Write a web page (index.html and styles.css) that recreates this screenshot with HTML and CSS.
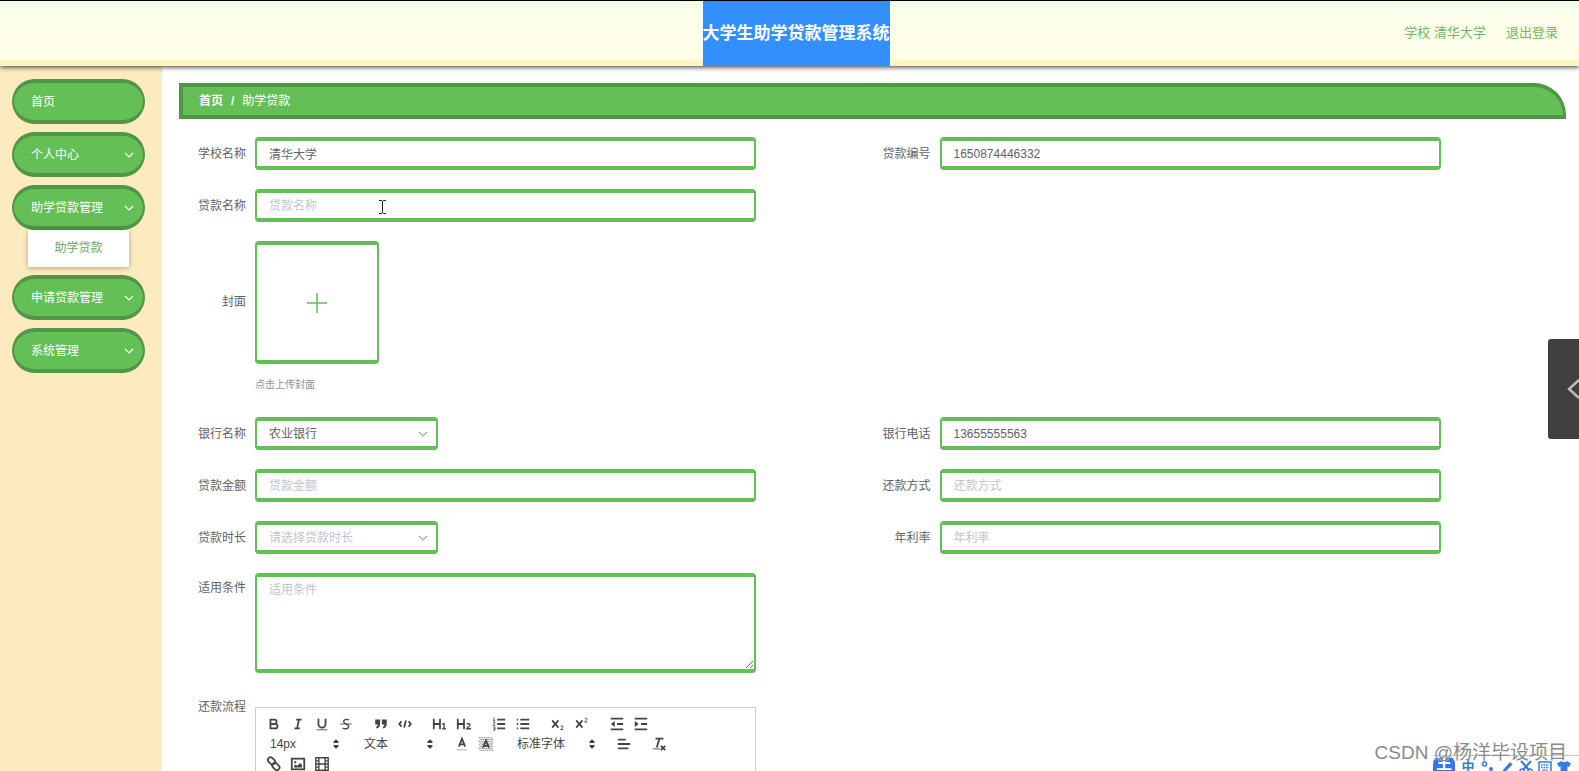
FILE: index.html
```html
<!DOCTYPE html>
<html lang="zh-CN">
<head>
<meta charset="utf-8">
<title>大学生助学贷款管理系统</title>
<link rel="stylesheet" href="styles.css">
</head>
<body>
<svg class="defs" aria-hidden="true">
  <symbol id="chevron" viewBox="0 0 10 10"><path d="M1 3l4 4 4-4" fill="none" stroke="currentColor" stroke-width="1.200"/></symbol>
  <symbol id="updown" viewBox="0 0 18 18"><path d="M7 11l2 2 2-2zM7 7l2-2 2 2z" fill="currentColor" stroke="currentColor" stroke-width="2" stroke-linejoin="round"/></symbol>
</svg>
<header class="header">
  <h1 class="header-title">大学生助学贷款管理系统</h1>
  <nav class="header-links">
    <a href="#">学校 清华大学</a>
    <a href="#">退出登录</a>
  </nav>
</header>
<div class="layout">
  <nav class="sidebar">
    <button class="menu-item" type="button">首页</button>
    <button class="menu-item" type="button">个人中心<svg class="chevron"><use href="#chevron"/></svg></button>
    <div class="menu-group">
      <button class="menu-item" type="button">助学贷款管理<svg class="chevron"><use href="#chevron"/></svg></button>
      <a class="submenu-item" href="#">助学贷款</a>
    </div>
    <button class="menu-item" type="button">申请贷款管理<svg class="chevron"><use href="#chevron"/></svg></button>
    <button class="menu-item" type="button">系统管理<svg class="chevron"><use href="#chevron"/></svg></button>
  </nav>
  <main class="main">
    <nav class="breadcrumb"><a href="#">首页</a><span class="separator">/</span><span>助学贷款</span></nav>
    <form class="form">
      <div class="row">
        <div class="field"><label for="school">学校名称</label><input class="control" id="school" type="text" value="清华大学"></div>
        <div class="field"><label for="number">贷款编号</label><input class="control" id="number" type="text" value="1650874446332"></div>
      </div>
      <div class="row">
        <div class="field"><label for="name">贷款名称</label><input class="control" id="name" type="text" placeholder="贷款名称"></div>
      </div>
      <div class="row">
        <div class="field field-upload"><label for="cover">封面</label>
          <div class="upload">
            <button class="upload-box" id="cover" type="button" aria-label="上传封面"><svg viewBox="0 0 20 20"><path d="M10 0v20M0 10h20" stroke="currentColor" stroke-width="1.5"/></svg></button>
            <p class="upload-tip">点击上传封面</p>
          </div>
        </div>
      </div>
      <div class="row">
        <div class="field"><label for="bank">银行名称</label>
          <span class="select"><select class="control" id="bank"><option>农业银行</option></select><svg class="chevron"><use href="#chevron"/></svg></span></div>
        <div class="field"><label for="phone">银行电话</label><input class="control" id="phone" type="text" value="13655555563"></div>
      </div>
      <div class="row">
        <div class="field"><label for="amount">贷款金额</label><input class="control" id="amount" type="text" placeholder="贷款金额"></div>
        <div class="field"><label for="method">还款方式</label><input class="control" id="method" type="text" placeholder="还款方式"></div>
      </div>
      <div class="row">
        <div class="field"><label for="term">贷款时长</label>
          <span class="select"><select class="control is-empty" id="term"><option>请选择贷款时长</option></select><svg class="chevron"><use href="#chevron"/></svg></span></div>
        <div class="field"><label for="rate">年利率</label><input class="control" id="rate" type="text" placeholder="年利率"></div>
      </div>
      <div class="row">
        <div class="field field-top"><label for="terms">适用条件</label><textarea class="control" id="terms" placeholder="适用条件"></textarea></div>
      </div>
      <div class="row row-editor">
        <div class="field field-top"><span class="label">还款流程</span>
          <div class="editor">
            <div class="toolbar">
              <div class="tools">
                <button type="button" aria-label="粗体"><svg viewBox="0 0 18 18"><path d="M5 4h4.500a2.500 2.500 0 0 1 0 5H5zM5 9h5.500a2.500 2.500 0 0 1 0 5H5z"/></svg></button>
                <button type="button" aria-label="斜体"><svg viewBox="0 0 18 18"><path d="M7 4h6M5 14h6M8 14l2-10"/></svg></button>
                <button type="button" aria-label="下划线"><svg viewBox="0 0 18 18"><path d="M5 3v6a4.012 4.012 0 0 0 4 4 4.012 4.012 0 0 0 4-4V3"/><path class="thin" d="M3 15.500h12"/></svg></button>
                <button type="button" aria-label="删除线"><svg viewBox="0 0 18 18"><path class="thin" d="M2.500 9h13"/><path class="mid" d="M12.500 4.500C10.500 3.500 6.300 3.400 6.300 6.200c0 1.600 1.700 2.200 3 2.600M8.800 9.200c1.700.5 3.200 1.200 3.200 2.700 0 3-4.800 2.900-6.800 1.600"/></svg></button>
              </div>
              <div class="tools">
                <button type="button" aria-label="引用"><svg viewBox="0 0 18 18"><path class="solid" d="M2.500 4H8v5c0 2.500-1.500 4.800-4.300 5v-2.200c1-.2 1.600-1 1.600-2.300H2.500zM10 4h5.500v5c0 2.500-1.500 4.800-4.300 5v-2.200c1-.2 1.600-1 1.600-2.300H10z"/></svg></button>
                <button type="button" aria-label="代码"><svg viewBox="0 0 18 18"><path d="M5 6L2.500 9 5 12M13 6l2.500 3-2.500 3M10 5l-2 8"/></svg></button>
              </div>
              <div class="tools">
                <button type="button" aria-label="一级标题"><svg viewBox="0 0 18 18"><path d="M2 3v12M9 3v12M2 9h7"/><path class="mid" d="M11.500 9.500l2-1v6M11.500 14.300h4"/></svg></button>
                <button type="button" aria-label="二级标题"><svg viewBox="0 0 18 18"><path d="M2 3v12M9 3v12M2 9h7"/><path class="mid" d="M12 9.500c1-1.400 4-1.200 3.700.6-.2 1.500-2.500 2.500-3.500 4.200H17"/></svg></button>
              </div>
              <div class="tools">
                <button type="button" aria-label="有序列表"><svg viewBox="0 0 18 18"><path d="M7 4h9M7 9h9M7 14h9"/><path class="thin" d="M2.500 2.500h1v3M2.300 5.500h2.500M2.500 7.500h2c0 1.500-2 1.700-2 3h2.500M2.500 12.500h2v3.500h-2M3 14.200h1.500"/></svg></button>
                <button type="button" aria-label="无序列表"><svg viewBox="0 0 18 18"><path d="M6 4h10M6 9h10M6 14h10M2 4h1.500M2 9h1.500M2 14h1.500"/></svg></button>
              </div>
              <div class="tools">
                <button type="button" aria-label="下标"><svg viewBox="0 0 18 18"><path d="M2.500 5l7 8M9.500 5l-7 8"/><path class="thin" d="M12 12c.5-1.300 3-1.200 2.700.3-.2 1-2 1.500-2.700 3h3.200"/></svg></button>
                <button type="button" aria-label="上标"><svg viewBox="0 0 18 18"><path d="M2.500 5l7 8M9.500 5l-7 8"/><path class="thin" d="M12 3.500c.5-1.300 3-1.200 2.700.3-.2 1-2 1.500-2.700 3h3.200"/></svg></button>
              </div>
              <div class="tools">
                <button type="button" aria-label="减少缩进"><svg viewBox="0 0 18 18"><path d="M2 3h14M2 15h14M9 9h7"/><path class="solid" d="M6.500 5.500v7L2 9z"/></svg></button>
                <button type="button" aria-label="增加缩进"><svg viewBox="0 0 18 18"><path d="M2 3h14M2 15h14M9 9h7"/><path class="solid" d="M2 5.500v7L6.500 9z"/></svg></button>
              </div>
            </div>
            <div class="toolbar">
              <span class="picker"><select aria-label="字号"><option>14px</option></select><svg><use href="#updown"/></svg></span>
              <span class="picker"><select aria-label="段落"><option>文本</option></select><svg><use href="#updown"/></svg></span>
              <div class="tools">
                <button type="button" aria-label="文字颜色"><svg viewBox="0 0 18 18"><path class="faint" d="M3 15.500h12"/><path d="M5.500 12L9 3l3.500 9M7 9.500h4"/></svg></button>
                <button type="button" aria-label="背景颜色"><svg viewBox="0 0 18 18"><path class="dots" d="M1 2h16M2 4h16M1 6h16M2 8h16M1 10h16M2 12h16M1 14h16M2 16h16"/><path d="M5.500 13L9 5l3.500 8M7 11h4"/></svg></button>
              </div>
              <span class="picker picker-font"><select aria-label="字体"><option>标准字体</option></select><svg><use href="#updown"/></svg></span>
              <div class="tools"><button type="button" aria-label="对齐"><svg viewBox="0 0 18 18"><path d="M2 4h9M2 9h14M2 14h12"/></svg></button></div>
              <div class="tools"><button type="button" aria-label="清除格式"><svg viewBox="0 0 18 18"><path d="M5 3h9M6.500 13L9.500 3M11 11l5 5M16 11l-5 5"/><path class="thin" d="M2 14.500h8"/></svg></button></div>
            </div>
            <div class="toolbar">
              <div class="tools">
                <button type="button" aria-label="链接"><svg viewBox="0 0 18 18"><g transform="rotate(45 9 9)"><rect x="0" y="5.500" width="9" height="6" rx="3"/><rect x="8" y="6.500" width="9" height="6" rx="3"/></g></svg></button>
                <button type="button" aria-label="图片"><svg viewBox="0 0 18 18"><rect x="2" y="3" width="14" height="12"/><circle class="solid" cx="6" cy="7" r="1.300"/><path class="solid" d="M4.500 13v-2l2-1.500L8 11l3.500-3 2 2v3z"/></svg></button>
                <button type="button" aria-label="视频"><svg viewBox="0 0 18 18"><path class="mid" d="M2 2h14v14H2zM5.500 2v14M12.500 2v14M5.500 9h7M2 5.500h3M2 9h3M2 12.500h3M13 5.500h3M13 9h3M13 12.500h3"/></svg></button>
              </div>
            </div>
            <div class="editor-body" contenteditable="true" aria-label="还款流程"></div>
          </div>
        </div>
      </div>
    </form>
  </main>
</div>
<svg class="text-cursor" viewBox="0 0 7 14" aria-hidden="true"><path d="M0 .5h3M4 .5h3M3.500 1v12M0 13.500h3M4 13.500h3" stroke="currentColor"/></svg>
<button class="drawer-handle" type="button" aria-label="展开"><svg viewBox="0 0 12 20"><path d="M12 1L2 10l10 9" fill="none" stroke="currentColor" stroke-width="2.500"/></svg></button>
<div class="ime">
  <span class="ime-logo">王</span>
  <span class="ime-mode">中</span>
  <svg viewBox="0 0 14 14"><circle cx="3.500" cy="4" r="2" fill="none" stroke="currentColor" stroke-width="1.500"/><circle cx="10" cy="9" r="2" fill="currentColor"/></svg>
  <svg viewBox="0 0 14 14"><path d="M2 13l1-3 7-8 2.500 2.500L5 12z" fill="currentColor"/></svg>
  <svg viewBox="0 0 14 14"><path d="M2 1l8 9M12 1L4 10" stroke="currentColor" stroke-width="2"/><g fill="none" stroke="currentColor" stroke-width="1.500"><circle cx="3" cy="11" r="2"/><circle cx="11" cy="11" r="2"/></g></svg>
  <svg viewBox="0 0 14 14"><path d="M1 2h12v10H1z" fill="none" stroke="currentColor" stroke-width="1.500"/><path d="M3 5h8M3 7.500h8" stroke="currentColor" stroke-width="1.500" stroke-dasharray="1.500 1"/><path d="M4 10h6" stroke="currentColor"/></svg>
  <svg viewBox="0 0 14 14"><path d="M4 1c1 1.500 5 1.500 6 0l4 2.500L12 7l-1.500-.7V14h-7V6.300L2 7 0 3.500z" fill="currentColor"/></svg>
</div>
<div class="watermark">CSDN @杨洋毕设项目</div>
</body>
</html>
```
FILE: styles.css
```css
* {
  box-sizing: border-box;
}

body {
  position: relative;
  display: flex;
  flex-direction: column;
  height: 100vh;
  margin: 0;
  overflow: hidden;
  background: #fff;
  color: #606266;
  font: 12px/18px "Liberation Sans", "Noto Sans CJK SC", sans-serif;
}

button,
input,
select,
textarea {
  margin: 0;
  font: inherit;
  color: inherit;
}

a {
  color: inherit;
  text-decoration: none;
}

.defs {
  position: absolute;
  width: 0;
  height: 0;
}

.header {
  position: relative;
  z-index: 1;
  display: grid;
  grid-template-columns: 1fr auto 1fr;
  flex: none;
  height: 66px;
  padding-left: 13px;
  border-top: 1px solid #000;
  background: linear-gradient(#effde7, #fdfeec 28%, #fefde8 88%, #fdf3c4 94%);
  box-shadow: 0 1px 5px #333;
}

.header-title {
  grid-column: 2;
  margin: 0;
  background: #338ffc;
  color: #fff;
  font-size: 17px;
  line-height: 66px;
  height: 65px;
}

.header-links {
  display: flex;
  justify-content: flex-end;
  gap: 20px;
  padding-right: 21px;
  color: #6fb965;
  font-size: 13px;
  line-height: 64px;
}

.layout {
  display: flex;
  flex: 1;
  min-height: 0;
}

.sidebar {
  display: flex;
  flex: none;
  flex-direction: column;
  gap: 8px;
  width: 162px;
  padding: 13px 17px 0 12px;
  background: #feeabf;
}

.menu-item {
  display: flex;
  align-items: center;
  justify-content: space-between;
  width: 100%;
  height: 45px;
  padding: 0 9px 0 17px;
  border: solid #509646;
  border-width: 4px 2px;
  border-radius: 23px;
  background: #64c056;
  color: #fff;
}

.chevron {
  width: 10px;
  height: 10px;
}

.submenu-item {
  display: block;
  margin: 0 16px;
  background: #fff;
  box-shadow: 0 1px 5px rgba(0, 0, 0, 0.3);
  color: #68a95f;
  line-height: 37px;
  text-align: center;
}

.main {
  flex: 1;
  min-width: 0;
  padding: 17px 13px 0 17px;
}

.breadcrumb {
  display: flex;
  gap: 8px;
  padding: 0 16px;
  border: solid #519547;
  border-width: 4px 3px 4px 4px;
  border-radius: 0 32px 0 0;
  background: #64c056;
  color: #fff;
  line-height: 28px;
}

.breadcrumb a,
.separator {
  font-weight: bold;
}

.form {
  display: flex;
  flex-direction: column;
  gap: 19px;
  padding: 18px 9px 0;
}

.row {
  display: grid;
  grid-template-columns: 1fr 1fr;
}

.field {
  display: grid;
  grid-template-columns: 58px 1fr;
  column-gap: 9px;
  align-items: center;
  padding-right: 17%;
}

.field label,
.label {
  text-align: right;
}

.control {
  display: block;
  width: 100%;
  height: 33px;
  padding: 0 12px;
  border: solid #64bd58;
  border-width: 4px 2px;
  border-radius: 4px;
  outline: 0;
  background: #fff;
}

.control::placeholder {
  color: #c0c4cc;
}

.is-empty {
  color: #c0c4cc;
}

.select {
  position: relative;
  width: 183px;
}

.select .control {
  appearance: none;
}

.select .chevron {
  position: absolute;
  top: 12px;
  right: 10px;
  color: #83c67a;
  pointer-events: none;
}

.field-upload,
.field-top {
  align-items: start;
}

.field-upload label {
  line-height: 123px;
}

.upload {
  padding-bottom: 5px;
}

.upload-box {
  display: flex;
  align-items: center;
  justify-content: center;
  width: 124px;
  height: 123px;
  padding: 0;
  border: solid #64bd58;
  border-width: 4px 2px;
  border-radius: 4px;
  background: #fff;
  color: #64bd58;
}

.upload-box svg {
  width: 20px;
  height: 20px;
}

.upload-tip {
  margin: 13px 0 0;
  color: #8b929c;
  font-size: 10px;
  line-height: 16px;
}

.field-top label {
  padding-top: 6px;
}

textarea.control {
  height: 100px;
  padding: 4px 12px;
  resize: vertical;
}

.row-editor {
  padding-top: 6px;
}

.editor {
  margin-top: 9px;
  padding: 6px;
  border: 1px solid #ccc;
}

.toolbar {
  display: flex;
  gap: 11px;
  color: #444;
}

.tools {
  display: flex;
}

.tools button {
  display: flex;
  align-items: center;
  justify-content: center;
  width: 24px;
  height: 20px;
  padding: 0;
  border: 0;
  background: none;
}

.tools svg,
.picker svg {
  width: 16px;
  height: 16px;
  fill: none;
  stroke: currentColor;
  stroke-width: 2;
}

.tools .thin {
  stroke-width: 1;
}

.tools .mid {
  stroke-width: 1.5;
}

.tools .solid {
  fill: currentColor;
  stroke: none;
}

.tools .faint {
  opacity: 0.5;
  stroke-width: 1;
}

.tools .dots {
  stroke-width: 1;
  stroke-dasharray: 1 1;
}

.picker {
  position: relative;
  width: 83px;
}

.picker-font {
  width: 92px;
}

.picker select {
  display: block;
  width: 100%;
  height: 20px;
  padding: 0 8px;
  border: 0;
  appearance: none;
  background: none;
}

.picker svg {
  position: absolute;
  top: 2px;
  right: 1px;
  pointer-events: none;
}

.editor-body {
  height: 200px;
}

.text-cursor {
  position: absolute;
  top: 200px;
  left: 379px;
  width: 7px;
  height: 14px;
  color: #222;
}

.drawer-handle {
  position: absolute;
  top: 339px;
  right: 0;
  display: flex;
  align-items: center;
  justify-content: flex-end;
  width: 31px;
  height: 100px;
  padding: 0;
  border: 0;
  border-radius: 3px 0 0 3px;
  background: #404040;
  color: #bbb;
}

.drawer-handle svg {
  width: 12px;
  height: 20px;
}

.ime {
  position: absolute;
  right: 0;
  bottom: -6px;
  display: flex;
  gap: 5px;
  align-items: center;
  height: 22px;
  padding-right: 8px;
  border-top: 1px solid #a9c8ec;
  color: #2f7de0;
}

.ime svg {
  width: 14px;
  height: 14px;
}

.ime-logo {
  width: 22px;
  height: 22px;
  border-radius: 8px;
  background: #3275f5;
  color: #fff;
  font-size: 16px;
  font-weight: bold;
  line-height: 16px;
  text-align: center;
}

.ime-mode {
  width: 16px;
  font-size: 13px;
  font-weight: bold;
  text-align: center;
}

.watermark {
  position: absolute;
  right: 12px;
  bottom: 4px;
  color: #8a8a8a;
  font-size: 19px;
  line-height: 28px;
  text-shadow: 0 0 1px #fff;
}
```
